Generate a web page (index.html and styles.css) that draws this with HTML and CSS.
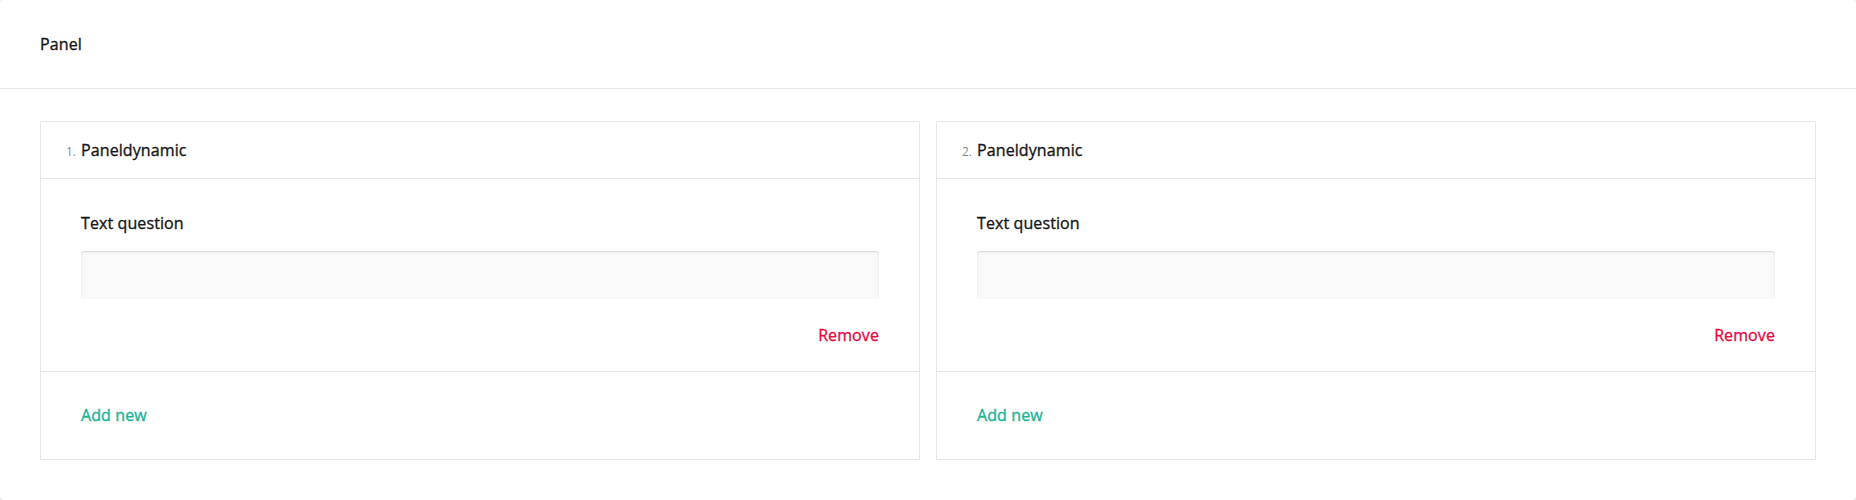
FILE: index.html
```html
<!DOCTYPE html>
<html lang="en">
<head>
<meta charset="utf-8">
<title>Panel</title>
<link rel="stylesheet" href="styles.css">
</head>
<body>
<div class="card">
  <div class="card-header">
    <h3 class="card-title">Panel</h3>
  </div>
  <div class="card-body">
    <div class="panel">
      <div class="panel-header">
        <span class="panel-num">1.</span>
        <span class="panel-title">Paneldynamic</span>
      </div>
      <div class="panel-content">
        <div class="q-title">Text question</div>
        <div class="q-input"></div>
        <div class="actions"><span class="btn-remove">Remove</span></div>
      </div>
      <div class="panel-footer"><span class="btn-add">Add new</span></div>
    </div>
    <div class="panel">
      <div class="panel-header">
        <span class="panel-num">2.</span>
        <span class="panel-title">Paneldynamic</span>
      </div>
      <div class="panel-content">
        <div class="q-title">Text question</div>
        <div class="q-input"></div>
        <div class="actions"><span class="btn-remove">Remove</span></div>
      </div>
      <div class="panel-footer"><span class="btn-add">Add new</span></div>
    </div>
  </div>
</div>
</body>
</html>
```

FILE: styles.css
```css
html, body {
  margin: 0;
  padding: 0;
  background: #f3f3f3;
}
body {
  font-family: "Open Sans", "Liberation Sans", sans-serif;
  color: #161616;
  font-size: 16px;
  line-height: 24px;
}
.card {
  box-sizing: border-box;
  height: 500px;
  background: #fff;
  border-radius: 4px;
  box-shadow: 0 1px 2px rgba(0, 0, 0, 0.15);
  overflow: hidden;
}
.card-header {
  padding: 32px 40px;
  border-bottom: 1px solid #e6e6e6;
}
.card-title,
.panel-title,
.q-title,
.btn-remove,
.btn-add {
  font-weight: 400;
  -webkit-text-stroke: 0.35px currentColor;
  letter-spacing: 0.1px;
}
.card-title {
  margin: 0;
  font-size: 16px;
  line-height: 24px;
}
.card-body {
  display: grid;
  grid-template-columns: 1fr 1fr;
  gap: 16px;
  padding: 32px 40px 40px;
  align-items: start;
}
.panel {
  border: 1px solid #e6e6e6;
}
.panel-header {
  display: flex;
  align-items: baseline;
  height: 24px;
  padding: 16px 40px 16px 25px;
  border-bottom: 1px solid #e6e6e6;
}
.panel-num {
  font-size: 12px;
  line-height: 16px;
  color: rgba(0, 0, 0, 0.5);
  width: 15px;
}
.panel-content {
  padding: 32px 40px 24px;
  border-bottom: 1px solid #e6e6e6;
}
.q-title {
  margin-bottom: 16px;
}
.q-input {
  height: 48px;
  background: #f9f9f9;
  border-radius: 3px;
  box-shadow: inset 0 1px 2px rgba(0, 0, 0, 0.15);
}
.actions {
  display: flex;
  justify-content: flex-end;
  margin-top: 24px;
}
.btn-remove {
  color: #e60a3e;
}
.panel-footer {
  padding: 31px 40px 32px;
}
.btn-add {
  color: #19b394;
}
```
